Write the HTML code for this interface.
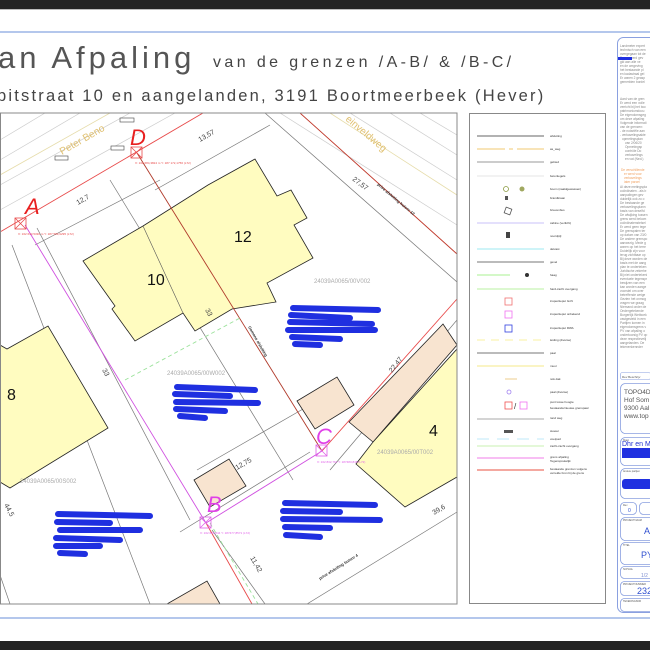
<!DOCTYPE html>
<html><head><meta charset="utf-8"><style>
html,body{margin:0;padding:0;background:#fff;width:650px;height:650px;overflow:hidden}
svg{display:block}
.t{font-family:"Liberation Sans",sans-serif}
</style></head><body>
<svg width="650" height="650" viewBox="0 0 650 650" xmlns="http://www.w3.org/2000/svg" class="t">
<rect x="0" y="0" width="650" height="9" fill="#232323"/>
<rect x="0" y="9" width="650" height="1" fill="#bbb"/>
<rect x="0" y="641" width="650" height="9" fill="#232323"/>
<line x1="0" y1="32" x2="650" y2="32" stroke="#6a8fd8" stroke-width="1"/>
<line x1="0" y1="618" x2="650" y2="618" stroke="#6a8fd8" stroke-width="1"/>

<!-- title -->
<text x="-2" y="68" font-size="31" fill="#555" letter-spacing="4" font-weight="300">an Afpaling</text>
<text x="213" y="67" font-size="16" fill="#444" letter-spacing="3.4">van de grenzen  /A-B/ &amp; /B-C/</text>
<text x="-3" y="101" font-size="16.5" fill="#444" letter-spacing="2.2">pitstraat 10 en aangelanden, 3191 Boortmeerbeek (Hever)</text>

<!-- map -->
<svg x="0" y="113" width="457" height="491" viewBox="0 113 457 491" overflow="hidden">
<g stroke="#ccc" stroke-width="0.7" fill="none">
<line x1="0" y1="160" x2="80" y2="113"/><line x1="0" y1="185" x2="130" y2="113"/>
<line x1="0" y1="210" x2="175" y2="113"/><line x1="0" y1="140" x2="45" y2="113"/>
<line x1="280" y1="113" x2="457" y2="225"/><line x1="350" y1="113" x2="457" y2="180"/>
<line x1="390" y1="113" x2="457" y2="155"/><line x1="420" y1="113" x2="457" y2="135"/>
</g>
<g stroke="#e6dcaa" stroke-width="0.8" fill="none">
<line x1="0" y1="175" x2="110" y2="113"/><line x1="330" y1="113" x2="457" y2="195"/>
</g>
<g stroke="#777" stroke-width="0.7" fill="none">
<line x1="265" y1="113" x2="457" y2="282"/>
<line x1="12" y1="245" x2="150" y2="604"/>
<line x1="110" y1="180" x2="293" y2="480"/>
<line x1="37" y1="228" x2="190" y2="520"/>
<line x1="307" y1="604" x2="457" y2="512"/>
<line x1="180" y1="532" x2="310" y2="452"/>
<line x1="197" y1="470" x2="310" y2="405"/>
<line x1="35" y1="245" x2="160" y2="180"/>
<line x1="155" y1="190" x2="270" y2="125"/>
<line x1="330" y1="470" x2="457" y2="320"/>
<line x1="212" y1="530" x2="265" y2="604"/>
<line x1="0" y1="575" x2="10" y2="604"/>
</g>
<!-- buildings -->
<g stroke="#222" stroke-width="0.8" fill="#fffcc0">
<polygon points="83,261 143,226 208,185 255,159 277,196 291,190 307,218 294,225 313,258 267,283 276,302 232,309 195,331 183,313 135,341 112,309 115,306"/>
<polygon points="0,345 7,349 48,326 108,428 10,488 0,482"/>
<polygon points="457,349 457,477 405,507 356,464 373,442"/>
</g>
<g stroke="#222" stroke-width="0.8" fill="#f8e4d0">
<polygon points="349,422 443,324 457,345 373,442"/>
<polygon points="297,401 337,377 354,405 315,429"/>
<polygon points="194,480 229,459 246,486 210,507"/>
<polygon points="167,604 207,581 220,604"/>
</g>
<line x1="143" y1="226" x2="183" y2="313" stroke="#555" stroke-width="0.6"/>
<!-- boundaries -->
<g fill="none" stroke-width="0.9">
<line x1="0" y1="232" x2="203" y2="113" stroke="#e84a4a"/>
<line x1="137" y1="153" x2="322" y2="451" stroke="#b03a2a"/>
<line x1="25" y1="225" x2="206" y2="523" stroke="#d050e0"/>
<line x1="206" y1="523" x2="322" y2="451" stroke="#d050e0"/>
<line x1="322" y1="451" x2="457" y2="299" stroke="#e84a4a"/>
<line x1="300" y1="113" x2="457" y2="254" stroke="#c0392b"/>
<line x1="206" y1="523" x2="252" y2="604" stroke="#e84a4a"/>
<line x1="210" y1="523" x2="258" y2="604" stroke="#9be29b" stroke-dasharray="4,3"/>
<line x1="125" y1="380" x2="240" y2="318" stroke="#9be29b" stroke-dasharray="4,3"/>
</g>
<!-- points -->
<g fill="none" stroke-width="0.8">
<g stroke="#e84a4a"><rect x="131" y="147" width="11" height="11"/><line x1="131" y1="147" x2="142" y2="158"/><line x1="142" y1="147" x2="131" y2="158"/>
<rect x="15" y="218" width="11" height="11"/><line x1="15" y1="218" x2="26" y2="229"/><line x1="26" y1="218" x2="15" y2="229"/></g>
<g stroke="#e060e8"><rect x="200" y="517" width="11" height="11"/><line x1="200" y1="517" x2="211" y2="528"/><line x1="211" y1="517" x2="200" y2="528"/>
<rect x="316" y="445" width="11" height="11"/><line x1="316" y1="445" x2="327" y2="456"/><line x1="327" y1="445" x2="316" y2="456"/></g>
</g>
<g font-style="italic" font-size="22">
<text x="130" y="145" fill="#e82020">D</text>
<text x="25" y="214" fill="#e82020">A</text>
<text x="207" y="512" fill="#e040e8">B</text>
<text x="316" y="444" fill="#e040e8">C</text>
</g>
<g font-size="3" fill="#e84a4a"><text x="135" y="164">X: 162 684,3824 m Y: 187 172,1756 (L72)</text><text x="18" y="235">X: 162 633,5330 m Y: 187 589,9295 (L72)</text></g>
<g font-size="3" fill="#e060e8"><text x="200" y="534">X: 162 828,844 Y: 187477,8571 (L72)</text><text x="317" y="463">X: 162 832,761 Y: 187483,848 (L72)</text></g>
<!-- labels -->
<g font-size="16" fill="#111"><text x="234" y="242">12</text><text x="147" y="285">10</text><text x="7" y="400">8</text><text x="429" y="436">4</text></g>
<g font-size="6" fill="#aaa"><text x="314" y="283">24039A0065/00V002</text><text x="167" y="375">24039A0065/00W002</text><text x="20" y="483">24039A0065/00S002</text><text x="377" y="454">24039A0065/00T002</text></g>
<g font-size="7" fill="#444">
<text transform="translate(78,205) rotate(-30)">12,7</text>
<text transform="translate(200,142) rotate(-30)">13,57</text>
<text transform="translate(352,180) rotate(37)">27,57</text>
<text transform="translate(102,370) rotate(62)">33</text>
<text transform="translate(205,310) rotate(62)">33</text>
<text transform="translate(237,470) rotate(-30)">12,75</text>
<text transform="translate(392,373) rotate(-52)">22,47</text>
<text transform="translate(434,515) rotate(-30)">39,6</text>
<text transform="translate(250,558) rotate(60)">11,42</text>
<text transform="translate(4,505) rotate(62)">44,5</text>
</g>
<g font-size="4" fill="#333" font-weight="bold">
<text transform="translate(377,185) rotate(40)">prive afsluiting huisnr 12</text>
<text transform="translate(248,327) rotate(60)">Gemene afsluiting</text>
<text transform="translate(320,580) rotate(-32)">prive afsluiting huisnr 4</text>
</g>
<g font-size="10" fill="#e0c070">
<text transform="translate(62,155) rotate(-30)">Peter Beno</text>
<text transform="translate(345,120) rotate(40)">einveldweg</text>
</g>
<g fill="#fff" stroke="#444" stroke-width="0.6">
<rect x="120" y="118" width="14" height="4"/><rect x="111" y="146" width="13" height="4"/><rect x="55" y="156" width="13" height="4"/>
</g>
<!-- scribbles -->
<g stroke="#1f2fe0" stroke-width="6" stroke-linecap="round" fill="none">
<path d="M293 308 L378 310 M291 315 L350 318 M290 322 L372 324 M288 330 L375 330 M292 337 L340 339 M295 344 L320 345"/>
<path d="M177 387 L255 390 M175 394 L230 396 M176 402 L258 403 M176 409 L225 411 M180 416 L205 418"/>
<path d="M58 514 L150 516 M57 522 L110 523 M60 530 L140 530 M56 538 L120 540 M56 546 L100 546 M60 553 L85 554"/>
<path d="M285 503 L375 505 M283 511 L340 512 M283 519 L380 520 M285 527 L330 528 M286 535 L320 537"/>
</g>
</svg>
<rect x="0.5" y="113" width="456.5" height="491" fill="none" stroke="#888" stroke-width="1"/>

<!-- legend -->
<rect x="469.5" y="113.5" width="136" height="490" fill="#fff" stroke="#888" stroke-width="1"/>
<g stroke-width="1" fill="none">
<line x1="477" y1="136" x2="544" y2="136" stroke="#666"/>
<line x1="477" y1="149" x2="544" y2="149" stroke="#f0c870" stroke-dasharray="28,4,4,4"/>
<line x1="477" y1="162" x2="544" y2="162" stroke="#999"/>
<line x1="477" y1="176" x2="544" y2="176" stroke="#eee" stroke-width="1.5"/>
<line x1="477" y1="223" x2="544" y2="223" stroke="#c8c0f8"/>
<line x1="477" y1="249" x2="544" y2="249" stroke="#9ee8f0"/>
<line x1="477" y1="262" x2="544" y2="262" stroke="#777"/>
<line x1="477" y1="275" x2="510" y2="275" stroke="#a8f090"/>
<line x1="477" y1="289" x2="544" y2="289" stroke="#b8f0a0"/>
<line x1="477" y1="340" x2="544" y2="340" stroke="#f8f0a0" stroke-dasharray="8,6"/>
<line x1="477" y1="353" x2="544" y2="353" stroke="#777"/>
<line x1="477" y1="366" x2="544" y2="366" stroke="#f8f0b0" stroke-width="1.5"/>
<line x1="477" y1="419" x2="544" y2="419" stroke="#aaa"/>
<line x1="477" y1="439" x2="544" y2="439" stroke="#bfe8f8" stroke-dasharray="12,8"/>
<line x1="477" y1="446" x2="544" y2="446" stroke="#c8f0b0"/>
<line x1="477" y1="458" x2="544" y2="458" stroke="#f07ce8"/>
<line x1="477" y1="470" x2="544" y2="470" stroke="#f4a8a0" stroke-width="2"/>
</g>
<g fill="none" stroke-width="0.8">
<circle cx="506" cy="189" r="2.5" stroke="#8a9a40"/><circle cx="522" cy="189" r="2.5" fill="#a0a860" stroke="none"/>
<rect x="505" y="196" width="3" height="4" fill="#555"/>
<rect x="505" y="208" width="6" height="6" stroke="#555" transform="rotate(20 508 211)"/>
<rect x="506" y="232" width="4" height="6" fill="#444"/>
<circle cx="527" cy="275" r="2" fill="#333"/>
<rect x="505" y="298" width="7" height="7" stroke="#f07070"/>
<rect x="505" y="311" width="7" height="7" stroke="#f070f0"/>
<rect x="505" y="325" width="7" height="7" stroke="#3040e0"/>
<line x1="505" y1="379" x2="517" y2="379" stroke="#e8c070"/>
<circle cx="509" cy="392" r="2" stroke="#a080f0"/>
<rect x="505" y="402" width="7" height="7" stroke="#f05050"/><text x="514" y="409" font-size="8" fill="#333">/</text><rect x="520" y="402" width="7" height="7" stroke="#f070f0"/>
<rect x="504" y="430" width="9" height="3" fill="#555"/>
</g>
<g font-size="3" fill="#333">
<text x="550" y="137">afsluiting</text><text x="550" y="150">as_weg</text><text x="550" y="163">gebied</text><text x="550" y="177">betonlegels</text>
<text x="550" y="190">boom (naaldgewassen)</text><text x="550" y="199">brandkraan</text><text x="550" y="211">brievenbus</text><text x="550" y="224">cabine (verlicht)</text>
<text x="550" y="237">noordpijl</text><text x="550" y="250">delvast</text><text x="550" y="263">gevel</text><text x="550" y="276">haag</text>
<text x="550" y="290">hard-zacht overgang</text><text x="550" y="302">inspectieput GvN</text><text x="550" y="315">inspectieput onbekend</text><text x="550" y="329">inspectieput RWA</text>
<text x="550" y="341">leiding (diverse)</text><text x="550" y="354">paal</text><text x="550" y="367">muur</text><text x="550" y="380">nok dak</text>
<text x="550" y="393">paal (diverse)</text><text x="550" y="403">punt losse hoogte</text><text x="550" y="409">bestaande/nieuwe grenspaal</text><text x="550" y="419">rand weg</text>
<text x="550" y="432">stoeier</text><text x="550" y="440">voetpad</text><text x="550" y="447">zacht-zacht overgang</text><text x="550" y="458">grens afpaling</text><text x="550" y="462">Tegensprekelijk</text>
<text x="550" y="470">bestaande grenzen volgens</text><text x="550" y="474">verrelde bron bij de grens</text>
</g>

<!-- right panel -->
<rect x="617.5" y="37.5" width="40" height="575" rx="6" fill="#fff" stroke="#8aa0e0" stroke-width="1"/>
<g fill="#888" font-size="3.2">
<text x="620" y="47">Landmeter expert</text><text x="620" y="51">technisch van een</text><text x="620" y="55">overgegaan tot de</text><text x="620" y="59">Dagen werd gev</text><text x="620" y="63">gld aan alle ve</text><text x="620" y="67">en de omgeving</text><text x="620" y="71">het bestaande pl</text><text x="620" y="75">en kadastraal gel</text><text x="620" y="79">Er waren 2 geasp</text><text x="620" y="83">gemerkten bordel</text>
<text x="620" y="100">Aard van de gren</text><text x="620" y="104">Er werd een volle</text><text x="620" y="108">verricht bij het boc</text><text x="620" y="112">patrimoniumdocu</text><text x="620" y="116">De eigendomsgeg</text><text x="620" y="120">om deze afpaling</text><text x="620" y="124">Volgende informati</text><text x="620" y="128">van de grenzen:</text><text x="620" y="132">- de notariële aan</text><text x="620" y="136">- verkavelingsakte</text><text x="622" y="140">opmetingsplan</text><text x="625" y="144">van 2/06/20</text><text x="625" y="148">Opmetingsp</text><text x="625" y="152">contrôle Do</text><text x="625" y="156">verkavelings</text><text x="625" y="160">en vat (Ned.)</text>
</g>
<g fill="#f0a060" font-size="3.2"><text x="621" y="171">De verschillende</text><text x="624" y="175">er werd voor</text><text x="624" y="179">verkavelings</text><text x="624" y="183">later parcel</text></g>
<g fill="#888" font-size="3.2">
<text x="620" y="188">Al deze metingspla</text><text x="620" y="192">coördinaten - als b</text><text x="620" y="196">aanpalingen gev</text><text x="620" y="200">duidelijk ook zo o</text><text x="620" y="204">De bestaande ge</text><text x="620" y="208">verkavelingsplann</text><text x="620" y="212">basis van deselfd</text><text x="620" y="216">De afwijking tussen</text><text x="620" y="220">grens werd bekom</text><text x="620" y="224">coördinatenstelsel</text><text x="620" y="228">Er werd geen tege</text><text x="620" y="232">De grenspalen ter</text><text x="620" y="236">op datum van 23/0</text><text x="620" y="240">De andere grenspo</text><text x="620" y="244">aanwezig. Mede g</text><text x="620" y="248">waren op het terre</text><text x="620" y="252">Duidelijk zijn voor</text><text x="620" y="256">terug zichtbaar op</text><text x="620" y="260">Bij deze worden de</text><text x="620" y="264">basis met de aang</text><text x="620" y="268">plan te onderteken</text><text x="620" y="272">Juridische zekerhe</text><text x="620" y="276">Bij niet ondertekeni</text><text x="620" y="280">eventuele tegenspr</text><text x="620" y="284">bewijzen van een</text><text x="620" y="288">kan worden aange</text><text x="620" y="292">voorstel om over</text><text x="620" y="296">betreffende weige</text><text x="620" y="300">Gezien het onmog</text><text x="620" y="304">vragen we graag</text><text x="620" y="308">Niemand onder de</text><text x="620" y="312">Ondergetekende</text><text x="620" y="316">Burgerlijk Wetboek</text><text x="620" y="320">vastgesteld in een</text><text x="620" y="324">Partijen komen in</text><text x="620" y="328">eigendomsgrens v</text><text x="620" y="332">PV van afpaling o</text><text x="620" y="336">ondertoorsig PV op</text><text x="620" y="340">deze respectievelij</text><text x="620" y="344">aangelanden. De</text><text x="620" y="348">tekenenkennder</text>
</g>
<rect x="618" y="57" width="14" height="3" fill="#1f2fe0"/>
<rect x="620.5" y="372.5" width="30" height="7" rx="2" fill="none" stroke="#8aa0e0" stroke-width="0.6"/>
<text x="622" y="378" font-size="3" fill="#555">Rev  Beschrijv</text>
<g fill="none" stroke="#8aa0e0" stroke-width="0.8">
<rect x="620.5" y="383.5" width="34" height="50" rx="5"/>
<rect x="620.5" y="437.5" width="34" height="28" rx="5"/>
<rect x="620.5" y="468.5" width="34" height="30" rx="5"/>
<rect x="620.5" y="502.5" width="16" height="12" rx="4"/><rect x="639.5" y="502.5" width="16" height="12" rx="4"/>
<rect x="620.5" y="517.5" width="34" height="23" rx="5"/>
<rect x="620.5" y="542.5" width="34" height="22" rx="5"/>
<rect x="620.5" y="566.5" width="34" height="12" rx="4"/>
<rect x="620.5" y="581.5" width="34" height="14" rx="4"/>
<rect x="620.5" y="598.5" width="34" height="13" rx="4"/>
</g>
<g font-size="6.5" fill="#555"><text x="624" y="394">TOPO4D</text><text x="624" y="402">Hof Som</text><text x="624" y="410">9300 Aal</text><text x="624" y="418">www.top</text></g>
<text x="622" y="446" font-size="7" fill="#2030d0">Dhr en M</text>
<rect x="622" y="448" width="30" height="10" fill="#2030e0"/>
<rect x="622" y="479" width="30" height="10" rx="3" fill="#2030e0"/>
<g font-size="2.5" fill="#555"><text x="623" y="441">Klant</text><text x="623" y="472">Andere partijen</text><text x="623" y="506">Rev</text><text x="623" y="521">PROJECTNAAM</text><text x="623" y="546">TITEL</text><text x="623" y="570">SCHAAL</text><text x="623" y="585">PROJECTNUMMER</text><text x="623" y="602">TEKENINGSNR</text></g>
<text x="628" y="512" font-size="5" fill="#3050d0">0</text>
<text x="644" y="534" font-size="9" fill="#3050d0">A</text>
<text x="641" y="558" font-size="9" fill="#3050d0">PY</text>
<text x="641" y="577" font-size="5" fill="#8090d0">1/2</text>
<text x="637" y="594" font-size="9" fill="#3050d0">232</text>
</svg>
</body></html>
